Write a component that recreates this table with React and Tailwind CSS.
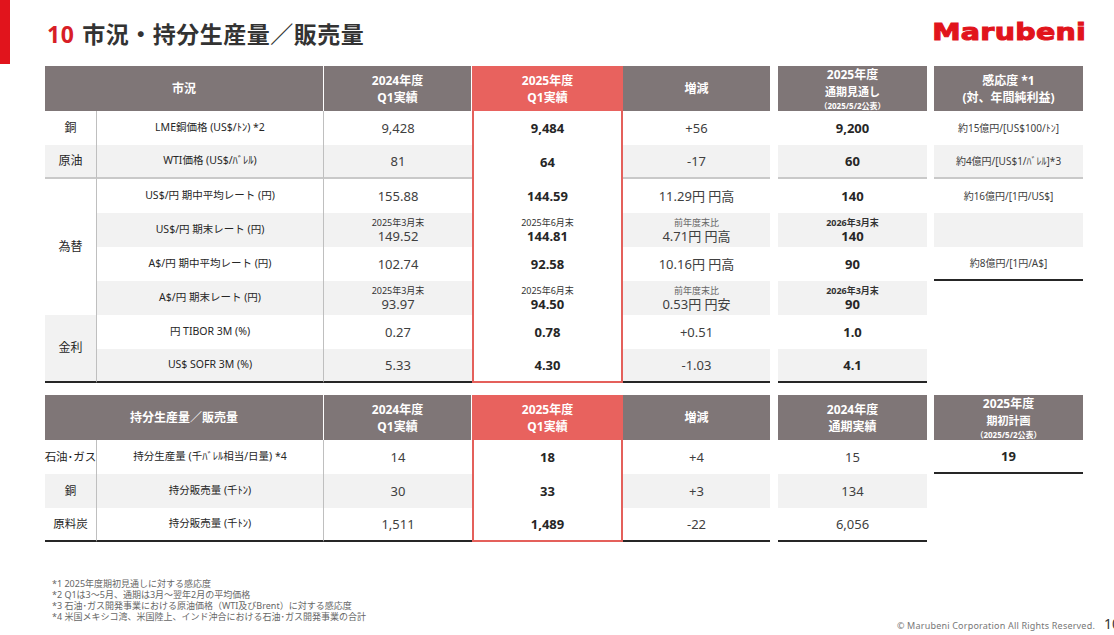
import React from 'react';

const GRID = "grid grid-cols-[52px_227px_148px_151px_147px_8px_149px_7px_149px]";
const SHADE = "bg-[#f2f2f2]";
const SEP = "border-b-2 border-b-[#c9c9c9]";
const END = "border-b-2 border-b-[#262626]";
const RED = "border-x-2 border-[#e4605b]";

const rows1 = [
  { label: "LME銅価格 (US$/ﾄﾝ) *2", prev: "9,428", cur: "9,484", diff: "+56", fc: "9,200", sens: "約15億円/[US$100/ﾄﾝ]" },
  { label: "WTI価格 (US$/ﾊﾞﾚﾙ)", prev: "81", cur: "64", diff: "-17", fc: "60", sens: "約4億円/[US$1/ﾊﾞﾚﾙ]*3" },
  { label: "US$/円 期中平均レート (円)", prev: "155.88", cur: "144.59", diff: "11.29円 円高", fc: "140", sens: "約16億円/[1円/US$]" },
  { label: "US$/円 期末レート (円)", prev: ["2025年3月末", "149.52"], cur: ["2025年6月末", "144.81"], diff: ["前年度末比", "4.71円 円高"], fc: ["2026年3月末", "140"], sens: "" },
  { label: "A$/円 期中平均レート (円)", prev: "102.74", cur: "92.58", diff: "10.16円 円高", fc: "90", sens: "約8億円/[1円/A$]" },
  { label: "A$/円 期末レート (円)", prev: ["2025年3月末", "93.97"], cur: ["2025年6月末", "94.50"], diff: ["前年度末比", "0.53円 円安"], fc: ["2026年3月末", "90"], sens: null },
  { label: "円 TIBOR 3M (%)", prev: "0.27", cur: "0.78", diff: "+0.51", fc: "1.0", sens: null },
  { label: "US$ SOFR 3M (%)", prev: "5.33", cur: "4.30", diff: "-1.03", fc: "4.1", sens: null },
];

// row index -> [name, span, shaded]
const cats1 = { 0: ["銅", 1, false], 1: ["原油", 1, true], 2: ["為替", 4, false], 6: ["金利", 2, true] };
const SPAN = { 1: "row-span-1", 2: "row-span-2", 4: "row-span-4" };

const rows2 = [
  { cat: "石油･ガス", label: "持分生産量 (千ﾊﾞﾚﾙ相当/日量) *4", prev: "14", cur: "18", diff: "+4", fy: "15", plan: "19" },
  { cat: "銅", label: "持分販売量 (千ﾄﾝ)", prev: "30", cur: "33", diff: "+3", fy: "134" },
  { cat: "原料炭", label: "持分販売量 (千ﾄﾝ)", prev: "1,511", cur: "1,489", diff: "-22", fy: "6,056" },
];

const footnotes = [
  "*1 2025年度期初見通しに対する感応度",
  "*2 Q1は3～5月、通期は3月～翌年2月の平均価格",
  "*3 石油･ガス開発事業における原油価格（WTI及びBrent）に対する感応度",
  "*4 米国メキシコ湾、米国陸上、インド沖合における石油･ガス開発事業の合計",
];

function Cell({ children, className = "" }) {
  return (
    <div className={`flex flex-col items-center justify-center text-center ${className}`}>
      {children}
    </div>
  );
}

function Val({ v, bold, boldSub, subGrey }) {
  if (Array.isArray(v)) {
    return (
      <>
        <span className={`text-[9px] leading-[12px] ${boldSub ? "font-bold text-[#333]" : subGrey ? "text-[#666]" : "text-[#333]"}`}>{v[0]}</span>
        <span className={`text-[13px] leading-[15px] ${bold ? "font-bold text-[#262626]" : "text-[#404040]"}`}>{v[1]}</span>
      </>
    );
  }
  return <span className={`text-[13px] leading-[16px] ${bold ? "font-bold text-[#262626]" : "text-[#404040]"}`}>{v}</span>;
}

function Head({ children, className = "" }) {
  return (
    <Cell className={`bg-[#7f7677] text-white font-bold text-[12px] leading-[17px] ${className}`}>
      {children}
    </Cell>
  );
}

function MarketTable() {
  return (
    <div className={`${GRID} grid-rows-[45px_repeat(8,34px)]`}>
      <Head className="col-span-2 border-r border-white">市況</Head>
      <Head className="border-r border-white"><span>2024年度</span><span>Q1実績</span></Head>
      <Cell className="bg-[#e8625e] text-white font-bold text-[12px] leading-[17px]"><span>2025年度</span><span>Q1実績</span></Cell>
      <Head>増減</Head>
      <div />
      <Head className="leading-[15px]">
        <span>2025年度</span>
        <span className="text-[11px]">通期見通し</span>
        <span className="text-[8px] leading-[11px]">（2025/5/2公表）</span>
      </Head>
      <div />
      <Head><span>感応度 *1</span><span>(対、年間純利益)</span></Head>

      {rows1.map((r, i) => {
        const shade = i % 2 === 1 ? SHADE : "bg-white";
        const line = i === 1 ? SEP : i === 7 ? END : "";
        const cat = cats1[i];
        const sensShade = i <= 4 ? shade : "bg-white";
        const sensLine = i === 1 ? SEP : i === 4 ? END : "";
        return (
          <React.Fragment key={i}>
            {cat && (
              <Cell className={`${SPAN[cat[1]]} ${cat[2] ? SHADE : "bg-white"} border-r border-r-[#bfbfbf] text-[12px] text-[#262626] ${i === 1 ? SEP : i === 6 ? END : ""}`}>
                {cat[0]}
              </Cell>
            )}
            <Cell className={`${shade} ${line} border-r border-r-[#bfbfbf] text-[10.5px] text-[#262626]`}>{r.label}</Cell>
            <Cell className={`${shade} ${line}`}><Val v={r.prev} /></Cell>
            <Cell className={`bg-white ${RED} ${i === 7 ? "border-b-2 border-b-[#e4605b]" : ""}`}><Val v={r.cur} bold /></Cell>
            <Cell className={`${shade} ${line}`}><Val v={r.diff} subGrey /></Cell>
            <div />
            <Cell className={`${shade} ${line}`}><Val v={r.fc} bold boldSub /></Cell>
            <div />
            <Cell className={`${sensShade} ${sensLine} text-[10px] text-[#404040]`}>{r.sens}</Cell>
          </React.Fragment>
        );
      })}
    </div>
  );
}

function VolumeTable() {
  return (
    <div className={`${GRID} grid-rows-[45px_repeat(3,34px)]`}>
      <Head className="col-span-2 border-r border-white">持分生産量／販売量</Head>
      <Head className="border-r border-white"><span>2024年度</span><span>Q1実績</span></Head>
      <Cell className="bg-[#e8625e] text-white font-bold text-[12px] leading-[17px]"><span>2025年度</span><span>Q1実績</span></Cell>
      <Head>増減</Head>
      <div />
      <Head><span>2024年度</span><span>通期実績</span></Head>
      <div />
      <Head className="leading-[15px]">
        <span>2025年度</span>
        <span className="text-[11px]">期初計画</span>
        <span className="text-[8px] leading-[11px]">（2025/5/2公表）</span>
      </Head>

      {rows2.map((r, i) => {
        const shade = i === 1 ? SHADE : "bg-white";
        const line = i === 2 ? END : "";
        return (
          <React.Fragment key={i}>
            <Cell className={`${shade} ${line} border-r border-r-[#bfbfbf] text-[11.5px] text-[#262626] whitespace-nowrap`}>{r.cat}</Cell>
            <Cell className={`${shade} ${line} border-r border-r-[#bfbfbf] text-[10.5px] text-[#262626]`}>{r.label}</Cell>
            <Cell className={`${shade} ${line}`}><Val v={r.prev} /></Cell>
            <Cell className={`bg-white ${RED} ${i === 2 ? "border-b-2 border-b-[#e4605b]" : ""}`}><Val v={r.cur} bold /></Cell>
            <Cell className={`${shade} ${line}`}><Val v={r.diff} /></Cell>
            <div />
            <Cell className={`${shade} ${line}`}><Val v={r.fy} /></Cell>
            <div />
            <Cell className={i === 0 ? `bg-white ${END}` : "bg-white"}>{r.plan && <Val v={r.plan} bold />}</Cell>
          </React.Fragment>
        );
      })}
    </div>
  );
}

export default function App() {
  return (
    <div className="w-[1114px] h-[635px] bg-white overflow-hidden font-['Noto_Sans','Noto_Sans_CJK_JP',sans-serif] text-[#333]">
      {/* Header */}
      <div className="flex h-[66px]">
        <div className="w-[10px] h-[64px] bg-[#e1141c]" />
        <h1 className="ml-[37px] mt-[18px] text-[23px] leading-[32px] font-bold text-[#333] tracking-[0.5px]">
          <span className="text-[#d81e27] mr-[8px]">10</span>
          市況・持分生産量／販売量
        </h1>
        <div className="ml-auto mr-[28px] mt-[18px]">
          <span className="block origin-right scale-x-[1.24] font-['DejaVu_Sans',sans-serif] font-bold text-[23px] leading-[28px] text-[#e1141c] [-webkit-text-stroke:1px_#e1141c] tracking-[0.2px]">
            Marubeni
          </span>
        </div>
      </div>

      <div className="ml-[45px]">
        <MarketTable />
      </div>

      <div className="ml-[45px] mt-[12px]">
        <VolumeTable />
      </div>

      {/* Footer */}
      <div className="flex items-end justify-between mt-[36px]">
        <div className="ml-[52px] text-[9px] leading-[11px] text-[#666]">
          {footnotes.map((f) => (
            <p key={f}>{f}</p>
          ))}
        </div>
        <div className="flex items-baseline mb-[-12px] mr-[-6px]">
          <span className="text-[9px] text-[#777] tracking-[0.2px]">© Marubeni Corporation All Rights Reserved.</span>
          <span className="ml-[9px] text-[14px] text-[#333] w-[16px]">10</span>
        </div>
      </div>
    </div>
  );
}
